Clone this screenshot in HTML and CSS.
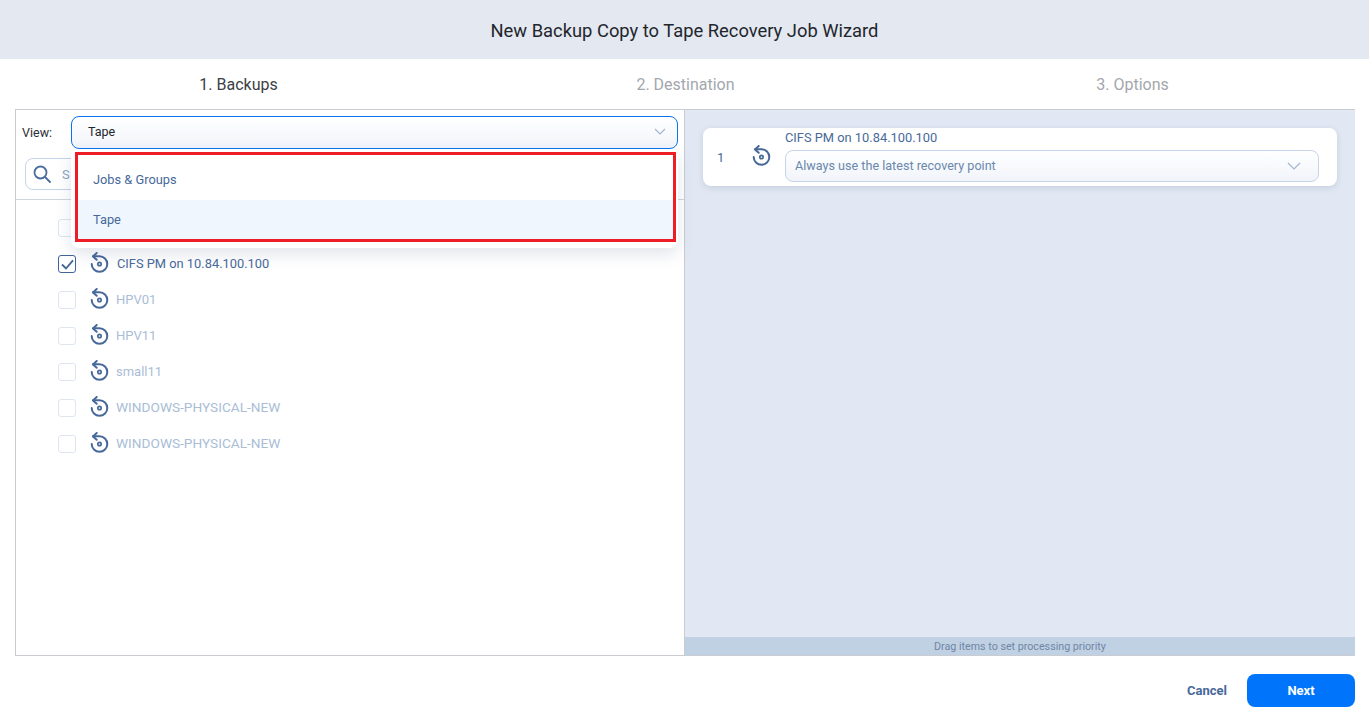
FILE: index.html
```html
<!DOCTYPE html>
<html lang="en">
<head>
<meta charset="utf-8">
<title>New Backup Copy to Tape Recovery Job Wizard</title>
<link rel="stylesheet" href="styles.css">
</head>
<body>
<svg class="defs" width="0" height="0" aria-hidden="true">
  <symbol id="restore" viewBox="0 0 20 24">
    <path d="M3 4.2H9.5A7.8 7.8 0 1 1 1.7 12" fill="none" stroke="currentColor" stroke-width="2" stroke-linecap="round"/>
    <path d="M6.7 1 3 4.4 6.7 7.8" fill="none" stroke="currentColor" stroke-width="2" stroke-linecap="round" stroke-linejoin="round"/>
    <circle cx="9.5" cy="12" r="1.7" fill="none" stroke="currentColor" stroke-width="1.7"/>
  </symbol>
</svg>
<div class="wizard">
  <header class="title">New Backup Copy to Tape Recovery Job Wizard</header>
  <nav class="steps">
    <div class="step step-active">1. Backups</div>
    <div class="step">2. Destination</div>
    <div class="step">3. Options</div>
  </nav>
  <main class="panels">
    <section class="left">
      <div class="view-row">
        <span class="view-label">View:</span>
        <div class="select select-open">
          <span>Tape</span>
          <svg class="chev" width="12" height="7" viewBox="0 0 12 7"><path d="M1 1l5 5 5-5" fill="none" stroke="currentColor" stroke-width="1.2"/></svg>
        </div>
      </div>
      <div class="search-row">
        <div class="search">
          <svg width="18" height="18" viewBox="0 0 18 18"><circle cx="7.5" cy="7.5" r="6" fill="none" stroke="#4a6d9c" stroke-width="1.8"/><path d="M12 12l5 5" stroke="#4a6d9c" stroke-width="1.8" stroke-linecap="round"/></svg>
          <span class="placeholder">S</span>
        </div>
      </div>
      <ul class="tree">
        <li class="row row-off"><span class="check"></span><svg class="ico"><use href="#restore"/></svg></li>
        <li class="row"><span class="check check-on"><svg width="13" height="11" viewBox="0 0 13 11"><path d="M1 5.5l4 4L12 1.4" fill="none" stroke="#3f6696" stroke-width="1.8"/></svg></span><svg class="ico"><use href="#restore"/></svg><span class="name name-mixed">CIFS PM on 10.84.100.100</span></li>
        <li class="row row-off"><span class="check"></span><svg class="ico"><use href="#restore"/></svg><span class="name">HPV01</span></li>
        <li class="row row-off"><span class="check"></span><svg class="ico"><use href="#restore"/></svg><span class="name">HPV11</span></li>
        <li class="row row-off"><span class="check"></span><svg class="ico"><use href="#restore"/></svg><span class="name">small11</span></li>
        <li class="row row-off"><span class="check"></span><svg class="ico"><use href="#restore"/></svg><span class="name name-caps">WINDOWS-PHYSICAL-NEW</span></li>
        <li class="row row-off"><span class="check"></span><svg class="ico"><use href="#restore"/></svg><span class="name name-caps">WINDOWS-PHYSICAL-NEW</span></li>
      </ul>
      <div class="menu">
        <div class="menu-item">Jobs &amp; Groups</div>
        <div class="menu-item menu-item-sel">Tape</div>
      </div>
      <div class="callout"></div>
    </section>
    <section class="right">
      <div class="queue">
        <div class="card">
          <span class="num">1</span>
          <svg class="ico card-ico"><use href="#restore"/></svg>
          <div class="card-body">
            <div class="card-name">CIFS PM on 10.84.100.100</div>
            <div class="select select-card">
              <span>Always use the latest recovery point</span>
              <svg class="chev" width="14" height="8" viewBox="0 0 14 8"><path d="M1 1l6 6 6-6" fill="none" stroke="currentColor" stroke-width="1.2"/></svg>
            </div>
          </div>
        </div>
      </div>
      <div class="hint">Drag items to set processing priority</div>
    </section>
  </main>
  <footer class="actions">
    <button class="btn-cancel" type="button">Cancel</button>
    <button class="btn-next" type="button">Next</button>
  </footer>
</div>
</body>
</html>
```
FILE: styles.css
```css
* { box-sizing: border-box; }
html, body { margin: 0; padding: 0; height: 100%; }
body { font-family: Roboto, "Liberation Sans", sans-serif; background: #fff; color: #222; overflow: hidden; }
.defs { position: absolute; }
.wizard { width: 1369px; height: 718px; display: flex; flex-direction: column; }

.title { height: 59px; flex: none; background: #e4e8f1; display: flex; align-items: center; justify-content: center; font-size: 18.35px; color: #22262c; padding-top: 1px; }

.steps { height: 50px; flex: none; display: grid; grid-template-columns: repeat(3, 447px); padding-left: 15px; }
.step { display: flex; align-items: center; justify-content: center; font-size: 16px; color: #a3a7ad; padding-top: 1px; }
.step-active { color: #3b3f46; }

.panels { height: 547px; flex: none; margin: 0 14px 0 15px; border: 1px solid #c9cdd2; display: flex; }
.left { width: 669px; flex: none; position: relative; border-right: 1px solid #c9cdd2; }
.right { flex: 1; background: #e1e8f3; display: flex; flex-direction: column; }

.view-row { display: flex; align-items: center; gap: 19px; padding: 6px 6px 0 6px; height: 39px; }
.view-label { font-size: 12.5px; color: #2a2e35; width: 30px; padding-bottom: 1px; }
.select { display: flex; align-items: center; justify-content: space-between; background: linear-gradient(#fff, #f1f4fa); }
.select-open { flex: 1; height: 33px; border: 1px solid #0a74f0; border-radius: 8px; padding: 0 11px 2px 16px; font-size: 12.5px; color: #22262c; }
.chev { color: #a3b6d0; flex: none; }

.search-row { height: 51px; padding: 9px 9px 0; border-bottom: 1px solid #d0d6de; }
.search { height: 32px; width: 300px; border: 1px solid #c5d4e8; border-radius: 8px; display: flex; align-items: center; gap: 11px; padding: 0 7px; font-size: 13px; color: #8ea3c0; }

.tree { list-style: none; margin: 10px 0 0; padding: 0 0 0 42px; }
.row { height: 36px; display: flex; align-items: center; font-size: 13px; color: #47699a; }
.row-off { color: #a9bdd6; }
.check { width: 18px; height: 18px; flex: none; border: 1px solid #dde5ef; border-radius: 3px; background: #fff; display: flex; align-items: center; justify-content: center; }
.check-on { border-color: #3f6696; }
.ico { width: 20px; height: 24px; flex: none; color: #47699a; margin: 0 6px 0 14px; }
.name { padding-bottom: 2px; }
.name-mixed { font-size: 12.85px; padding-left: 1px; }
.name-caps { font-size: 13.65px; }

.menu { position: absolute; left: 55px; top: 39px; width: 607px; height: 99px; background: #fff; border-radius: 8px; box-shadow: 0 6px 16px rgba(70, 90, 130, .16); padding: 11px 5px 0; z-index: 2; }
.menu-item { height: 40px; display: flex; align-items: center; padding: 0 0 2px 17px; font-size: 12.8px; color: #47699a; }
.menu-item-sel { background: #f0f6fd; }
.callout { position: absolute; left: 59px; top: 42px; width: 601px; height: 90px; border: 3px solid #ee1c25; z-index: 3; }

.queue { flex: 1; padding: 18px 18px 0; }
.card { height: 58px; width: 634px; background: #fff; border-radius: 8px; box-shadow: 0 2px 6px rgba(70, 90, 130, .18); display: flex; align-items: center; padding-left: 14px; }
.num { font-size: 13px; color: #47699a; width: 35px; }
.card .card-ico { margin: 0 13px 0 0; }
.card-body { flex: 1; padding-right: 18px; }
.card-name { font-size: 12.85px; line-height: 14px; color: #47699a; margin-bottom: 5px; margin-top: -2px; }
.select-card { height: 32px; border: 1px solid #c5d4e8; border-radius: 8px; padding: 0 17px 0 9px; font-size: 12.6px; color: #6a88ad; }

.hint { height: 18px; flex: none; background: #c0d1e3; font-size: 10.7px; color: #6f86a6; display: flex; align-items: center; justify-content: center; padding-top: 1px; }

.actions { flex: 1; display: flex; justify-content: flex-end; align-items: flex-start; padding: 18px 14px 0 0; gap: 20px; }
.btn-cancel, .btn-next { font: 700 13px Roboto, "Liberation Sans", sans-serif; border: 0; cursor: pointer; }
.btn-cancel { background: none; color: #47699a; height: 33px; padding: 0; }
.btn-next { width: 108px; height: 33px; background: #0074fa; color: #fff; border-radius: 8px; }
```
